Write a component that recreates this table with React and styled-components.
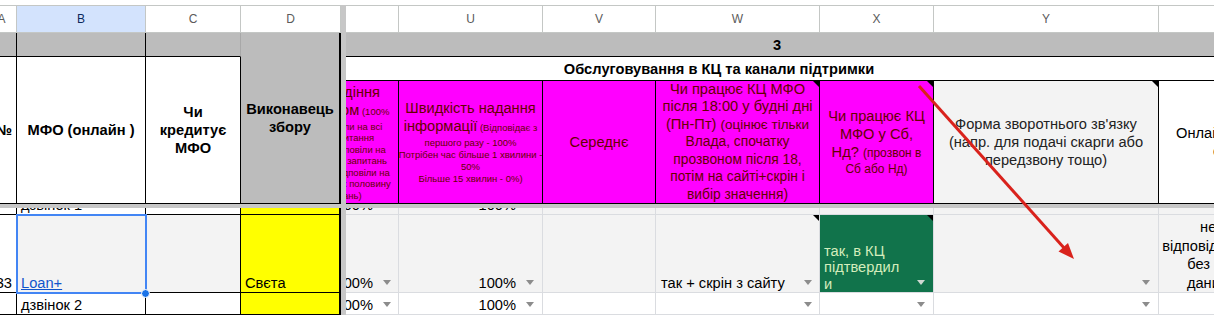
import React from 'react';
import styled, { createGlobalStyle } from 'styled-components';

const GlobalStyle = createGlobalStyle`
  html, body { margin: 0; padding: 0; background: #fff; overflow: hidden; }
  body { font-family: "Liberation Sans", Arial, sans-serif; font-size: 14.67px; color: #000; }
  * { box-sizing: border-box; }
`;

const LEFT_COLS = '30px 129px 95px 100px';
const RIGHT_COLS = '107px 144px 113px 164px 114px 225px 220px';
const DATA_LINE = '#dadce0';

const Sheet = styled.div`
  position: relative;
  width: 1214px;
  height: 315px;
  padding-top: 5px;
  overflow: hidden;
`;

const Panes = styled.div`
  display: flex;
  height: 100%;
`;

const Pane = styled.div`
  flex: ${p => (p.$width ? `0 0 ${p.$width}px` : '1 1 auto')};
  min-width: 0;
  overflow: hidden;
`;

const Track = styled.div`
  display: flex;
  flex-direction: column;
  height: 100%;
  width: ${p => p.$width}px;
  margin-left: -${p => p.$shift}px;
`;

const Grid = styled.div`
  display: grid;
  flex: none;
  grid-template-columns: ${p => p.$cols};
  grid-template-rows: ${p => p.$rows};
  margin-top: ${p => p.$offset || 0}px;
`;

const ColumnHeader = styled.div`
  border-top: 1px solid #c4c7c5;
  border-bottom: 1px solid #c4c7c5;
  border-right: 1px solid #c4c7c5;
  background: ${p => (p.$active ? '#d3e3fd' : '#fff')};
  color: ${p => (p.$active ? '#0b2a5c' : '#5b5b5b')};
  font-size: 12px;
  display: flex;
  align-items: center;
  justify-content: center;
`;

const VBar = styled.div`
  flex: 0 0 5px;
  background: #c7c7c7;
`;

const HBar = styled.div`
  flex: 0 0 4px;
  background: #c7c7c7;
`;

const ScrollArea = styled.div`
  flex: 1;
  overflow: hidden;
`;

const BandCell = styled.div`
  grid-column: ${p => p.$col || 'auto'};
  grid-row: ${p => p.$row || 'auto'};
  background: ${p => p.$bg || '#fff'};
  border-right: ${p => p.$rightW ?? 1}px solid ${p => p.$right || '#000'};
  border-bottom: 1px solid #000;
  display: flex;
  align-items: center;
  justify-content: ${p => p.$justify || 'center'};
  padding: 0 ${p => p.$padRight || 4}px 0 4px;
  font-weight: 700;
  text-align: center;
  line-height: 18px;
  white-space: nowrap;
  overflow: hidden;
`;

const HeadCell = styled.div`
  position: relative;
  background: ${p => p.$bg};
  color: ${p => p.$color};
  border-right: 1px solid #000;
  border-bottom: 1px solid #000;
  display: flex;
  flex-direction: column;
  align-items: center;
  justify-content: center;
  text-align: center;
  white-space: nowrap;
  overflow: hidden;
`;

const Line = styled.div`
  font-size: ${p => p.$size || 14.67}px;
  line-height: ${p => p.$lh || 18}px;
`;

const Small = styled.span`
  font-size: ${p => p.$size}px;
`;

const DataCell = styled.div`
  position: relative;
  z-index: ${p => (p.$selected ? 2 : 'auto')};
  background: ${p => p.$bg || '#fff'};
  border-right: ${p => p.$rightW ?? 1}px solid ${p => p.$line};
  border-bottom: 1px solid ${p => p.$line};
  display: flex;
  flex-direction: column;
  justify-content: flex-end;
  align-items: ${p => p.$align || 'stretch'};
  padding: 0 ${p => p.$padR ?? 4}px 0 ${p => p.$padL ?? 4}px;
  overflow: ${p => (p.$selected ? 'visible' : 'hidden')};
  outline: ${p => (p.$selected ? '2px solid #4285f4' : 'none')};
  outline-offset: -1px;
  white-space: nowrap;
  line-height: 17px;
`;

const DataLine = styled.div`
  display: flex;
  align-items: center;
  justify-content: ${p => p.$justify || 'flex-start'};
  gap: 10px;
  height: 17px;
`;

const Caret = styled.span`
  flex: none;
  width: 0;
  height: 0;
  margin-bottom: 3px;
  border-left: 4.5px solid transparent;
  border-right: 4.5px solid transparent;
  border-top: 5px solid ${p => (p.$light ? '#cfd8d2' : '#8c8c8c')};
`;

const Note = styled.span`
  position: absolute;
  top: 0;
  right: 0;
  border-top: 6px solid #000;
  border-left: 6px solid transparent;
`;

const FillHandle = styled.span`
  position: absolute;
  right: -5px;
  bottom: -6px;
  width: 9px;
  height: 9px;
  border-radius: 50%;
  background: #1a73e8;
  border: 1px solid #fff;
  z-index: 3;
`;

const LinkText = styled.span`
  color: #1155cc;
  text-decoration: underline;
`;

const ChipRow = styled.div`
  display: flex;
  align-items: flex-end;
  justify-content: space-between;
`;

const ChipText = styled.div`
  color: #d4edbc;
  line-height: 16.5px;
`;

const ChipCaret = styled(Caret)`
  margin-bottom: 7px;
`;

const CenterText = styled.div`
  text-align: center;
  line-height: 18.5px;
`;

const Overlay = styled.svg`
  position: absolute;
  left: 0;
  top: 0;
  pointer-events: none;
  z-index: 5;
`;

const MAGENTA = '#ff00ff';
const BERRY = '#660000';

function LeftPane() {
  return (
    <Pane $width={341}>
      <Track $width={354} $shift={13}>
        <Grid $cols={LEFT_COLS} $rows="28px">
          <ColumnHeader>A</ColumnHeader>
          <ColumnHeader $active>B</ColumnHeader>
          <ColumnHeader>C</ColumnHeader>
          <ColumnHeader>D</ColumnHeader>
        </Grid>
        <Grid $cols={LEFT_COLS} $rows="24px 24px 123px">
          <BandCell $bg="#bcbcbc" />
          <BandCell $bg="#bcbcbc" />
          <BandCell $bg="#bcbcbc" $right="#a8a8a8" />
          <BandCell $bg="#bcbcbc" $col="4" $row="1 / 4" $rightW={2}>
            Виконавець<br />збору
          </BandCell>
          <BandCell $col="1" $row="2 / 4" $justify="flex-end">№</BandCell>
          <BandCell $col="2" $row="2 / 4">МФО (онлайн )</BandCell>
          <BandCell $col="3" $row="2 / 4">Чи<br />кредитує<br />МФО</BandCell>
        </Grid>
        <HBar />
        <ScrollArea>
          <Grid $cols={LEFT_COLS} $rows="22px 78px 22px" $offset={-15}>
            <DataCell $line="#000" />
            <DataCell $line="#000">дзвінок 1</DataCell>
            <DataCell $line="#000" />
            <DataCell $line="#000" $rightW={2} $bg="#ffff00" />

            <DataCell $line="#000" $align="flex-end">33</DataCell>
            <DataCell $line="#000" $bg="#f3f3f3" $selected>
              <LinkText>Loan+</LinkText>
              <FillHandle />
            </DataCell>
            <DataCell $line="#000" $bg="#f3f3f3" />
            <DataCell $line="#000" $rightW={2} $bg="#ffff00">Свєта</DataCell>

            <DataCell $line="#000" />
            <DataCell $line="#000">дзвінок 2</DataCell>
            <DataCell $line="#000" />
            <DataCell $line="#000" $rightW={2} $bg="#ffff00" />
          </Grid>
        </ScrollArea>
      </Track>
    </Pane>
  );
}

function Percent() {
  return (
    <DataLine $justify="flex-end">
      100%<Caret />
    </DataLine>
  );
}

function CaretOnly() {
  return (
    <DataLine $justify="flex-end">
      <Caret />
    </DataLine>
  );
}

function RightPane() {
  return (
    <Pane>
      <Track $width={1087} $shift={54}>
        <Grid $cols={RIGHT_COLS} $rows="28px">
          <ColumnHeader />
          <ColumnHeader>U</ColumnHeader>
          <ColumnHeader>V</ColumnHeader>
          <ColumnHeader>W</ColumnHeader>
          <ColumnHeader>X</ColumnHeader>
          <ColumnHeader>Y</ColumnHeader>
          <ColumnHeader />
        </Grid>
        <Grid $cols={RIGHT_COLS} $rows="24px 24px 123px">
          <BandCell $bg="#bcbcbc" $col="1 / -1" $rightW={0} $padRight={121}>3</BandCell>
          <BandCell $col="1 / -1" $rightW={0} $padRight={237}>
            Обслуговування в КЦ та канали підтримки
          </BandCell>

          <HeadCell $bg={MAGENTA} $color={BERRY}>
            <Line>Поведіння</Line>
            <Line>клієнтом<Small $size={9.5}> (100%</Small></Line>
            <Line $size={9.5} $lh={11.5}>- відповіли на всі</Line>
            <Line $size={9.5} $lh={11.5}>на запитання</Line>
            <Line $size={9.5} $lh={11.5}>50% - відповіли на</Line>
            <Line $size={9.5} $lh={11.5}>половину запитань</Line>
            <Line $size={9.5} $lh={11.5}>0% - не відповіли на</Line>
            <Line $size={9.5} $lh={11.5}>більше ніж половину</Line>
            <Line $size={9.5} $lh={11.5}>питань)</Line>
          </HeadCell>
          <HeadCell $bg={MAGENTA} $color={BERRY}>
            <Line>Швидкість надання</Line>
            <Line>інформації<Small $size={9.5}> (Відповідає з</Small></Line>
            <Line $size={9.5} $lh={12}>першого разу - 100%</Line>
            <Line $size={9.5} $lh={12}>Потрібен час більше 1 хвилини -</Line>
            <Line $size={9.5} $lh={12}>50%</Line>
            <Line $size={9.5} $lh={12}>Більше 15 хвилин - 0%)</Line>
          </HeadCell>
          <HeadCell $bg={MAGENTA} $color={BERRY}>
            <Line>Середнє</Line>
          </HeadCell>
          <HeadCell $bg={MAGENTA} $color={BERRY}>
            <Note />
            <Line $lh={17.5}>Чи працює КЦ МФО</Line>
            <Line $lh={17.5}>після 18:00 у будні дні</Line>
            <Line $lh={17.5}>(Пн-Пт) <Small $size={13.5}>(оцінює тільки</Small></Line>
            <Line $lh={17.5} $size={13.8}>Влада, спочатку</Line>
            <Line $lh={17.5} $size={13.8}>прозвоном після 18,</Line>
            <Line $lh={17.5} $size={13.8}>потім на сайті+скрін і</Line>
            <Line $lh={17.5} $size={13.8}>вибір значення)</Line>
          </HeadCell>
          <HeadCell $bg={MAGENTA} $color={BERRY}>
            <Note />
            <Line>Чи працює КЦ</Line>
            <Line>МФО у Сб,</Line>
            <Line>Нд? <Small $size={12}>(прозвон в</Small></Line>
            <Line $size={12} $lh={15}>Сб або Нд)</Line>
          </HeadCell>
          <HeadCell $bg="#f3f3f3" $color="#222">
            <Note />
            <Line>Форма зворотнього зв'язку</Line>
            <Line>(напр. для подачі скарги або</Line>
            <Line>передзвону тощо)</Line>
          </HeadCell>
          <HeadCell $bg="#fff" $color="#000">
            <Line>Онлайн чат/консультант на</Line>
            <Line>сайті (так/ні/бот)</Line>
          </HeadCell>
        </Grid>
        <HBar />
        <ScrollArea>
          <Grid $cols={RIGHT_COLS} $rows="22px 78px 22px" $offset={-15}>
            <DataCell $line={DATA_LINE} $bg="#f3f3f3" $padR={7}><Percent /></DataCell>
            <DataCell $line={DATA_LINE} $bg="#f3f3f3" $padR={8}><Percent /></DataCell>
            <DataCell $line={DATA_LINE} $bg="#f3f3f3" />
            <DataCell $line={DATA_LINE} $bg="#f3f3f3" />
            <DataCell $line={DATA_LINE} $bg="#f3f3f3" />
            <DataCell $line={DATA_LINE} $bg="#f3f3f3" />
            <DataCell $line={DATA_LINE} $bg="#f3f3f3" />

            <DataCell $line={DATA_LINE} $bg="#f3f3f3" $padR={7}><Percent /></DataCell>
            <DataCell $line={DATA_LINE} $bg="#f3f3f3" $padR={8}><Percent /></DataCell>
            <DataCell $line={DATA_LINE} $bg="#f3f3f3" />
            <DataCell $line={DATA_LINE} $bg="#f3f3f3" $padL={5} $padR={7}>
              <Note />
              <DataLine $justify="space-between">
                так + скрін з сайту<Caret />
              </DataLine>
            </DataCell>
            <DataCell $line={DATA_LINE} $bg="#11734b" $padR={8}>
              <Note />
              <ChipRow>
                <ChipText>так, в КЦ<br />підтвердил<br />и</ChipText>
                <ChipCaret $light />
              </ChipRow>
            </DataCell>
            <DataCell $line={DATA_LINE} $bg="#f3f3f3" $padR={8}><CaretOnly /></DataCell>
            <DataCell $line={DATA_LINE} $bg="#f3f3f3" $align="center">
              <CenterText>
                не надає конкретної<br />
                відповіді, працює лише чат-бот<br />
                без надання контактних<br />
                даних або телефону КЦ
              </CenterText>
            </DataCell>

            <DataCell $line={DATA_LINE} $padR={7}><Percent /></DataCell>
            <DataCell $line={DATA_LINE} $padR={8}><Percent /></DataCell>
            <DataCell $line={DATA_LINE} />
            <DataCell $line={DATA_LINE} $padR={7}><CaretOnly /></DataCell>
            <DataCell $line={DATA_LINE} $padR={8}><CaretOnly /></DataCell>
            <DataCell $line={DATA_LINE} $padR={8}><CaretOnly /></DataCell>
            <DataCell $line={DATA_LINE} />
          </Grid>
        </ScrollArea>
      </Track>
    </Pane>
  );
}

export default function App() {
  return (
    <>
      <GlobalStyle />
      <Sheet>
        <Panes>
          <LeftPane />
          <VBar />
          <RightPane />
        </Panes>
        <Overlay width="1214" height="315">
          <line x1="919" y1="86" x2="1065" y2="249" stroke="#d9221c" strokeWidth="3" />
          <polygon points="1074,259 1058.5,251.5 1068,243" fill="#d9221c" />
        </Overlay>
      </Sheet>
    </>
  );
}
